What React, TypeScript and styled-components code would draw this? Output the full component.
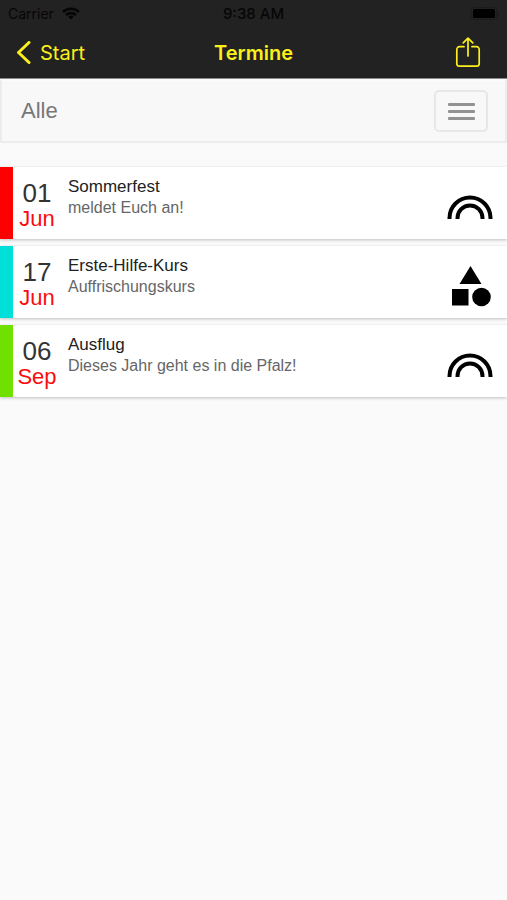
import React from "react";
import styled, { createGlobalStyle } from "styled-components";

const GlobalStyle = createGlobalStyle`
  *, *::before, *::after { box-sizing: border-box; }
  body {
    margin: 0;
    background: #fafafa;
    font-family: "Liberation Sans", Arial, sans-serif;
  }
`;

const Page = styled.div`
  min-height: 100vh;
  background: #fafafa;
`;

const Header = styled.header`
  background: #222222;
  border-bottom: 1px solid #8a8a8a;
  font-family: Inter, "Liberation Sans", sans-serif;
`;

const StatusBar = styled.div`
  display: grid;
  grid-template-columns: 1fr auto 1fr;
  align-items: center;
  height: 27px;
  padding: 0 8px;
  color: #060606;
  font-size: 14px;
  line-height: 20px;
`;

const Carrier = styled.span`
  display: flex;
  align-items: center;
  gap: 8px;
`;

const Clock = styled.span`
  font-size: 15px;
  font-weight: 500;
`;

const StatusEnd = styled.span`
  display: flex;
  justify-content: flex-end;
`;

const NavBar = styled.nav`
  display: grid;
  grid-template-columns: 1fr auto 1fr;
  align-items: center;
  height: 51px;
  padding: 0 26px 0 16px;
  color: #fbf01c;
`;

const BackLink = styled.a`
  display: flex;
  align-items: center;
  gap: 9px;
  justify-self: start;
  color: inherit;
  font-size: 20px;
  line-height: 24px;
  text-decoration: none;
`;

const Title = styled.h1`
  margin: 0 0 0 10px;
  font-size: 20px;
  font-weight: 600;
  line-height: 24px;
`;

const ShareButton = styled.button`
  display: flex;
  justify-self: end;
  padding: 0;
  border: 0;
  background: none;
  color: inherit;
  cursor: pointer;
`;

const FilterBar = styled.div`
  display: flex;
  align-items: center;
  justify-content: space-between;
  height: 64px;
  padding: 0 17px 0 19px;
  border: 2px solid #ececec;
  border-top-color: #fbfbfb;
  background: #f8f8f8;
`;

const FilterLabel = styled.span`
  color: #777777;
  font-size: 22px;
  line-height: 28px;
`;

const MenuButton = styled.button`
  display: flex;
  flex-direction: column;
  align-items: center;
  justify-content: center;
  gap: 4px;
  width: 54px;
  height: 42px;
  padding: 0;
  border: 2px solid #e7e7e7;
  border-radius: 5px;
  background: #f8f8f8;
  cursor: pointer;
`;

const MenuLine = styled.span`
  width: 27px;
  height: 3px;
  border-radius: 1px;
  background: #929292;
`;

const EventList = styled.ul`
  display: flex;
  flex-direction: column;
  gap: 7px;
  margin: 0;
  padding: 24px 0;
  list-style: none;
`;

const EventRow = styled.li<{ $accent: string }>`
  display: flex;
  min-height: 72px;
  padding-right: 14px;
  border-left: 13px solid ${(p) => p.$accent};
  background: #ffffff;
  box-shadow: 0 1px 3px rgba(0, 0, 0, 0.24);
`;

const EventDate = styled.time`
  display: flex;
  flex-direction: column;
  align-items: center;
  width: 48px;
  padding-top: 12px;
  color: #333333;
  font-size: 26px;
  line-height: 28px;
`;

const Month = styled.span`
  color: #fb0b0b;
  font-size: 22px;
  line-height: 24px;
`;

const EventText = styled.div`
  flex: 1;
  min-width: 0;
  padding: 9px 7px;
`;

const EventTitle = styled.h2`
  margin: 0;
  color: #222222;
  font-size: 17px;
  font-weight: 400;
  line-height: 21px;
`;

const EventNote = styled.p`
  margin: 0;
  color: #666666;
  font-size: 16px;
  line-height: 21px;
`;

const EventIcon = styled.span`
  display: flex;
  align-items: center;
  padding-top: 8px;
`;

const WifiIcon = () => (
  <svg width="18" height="13" viewBox="0 0 18 13" fill="none" stroke="currentColor" strokeWidth="2.6" aria-hidden="true">
    <path d="M1 5a11.3 11.3 0 0 1 16 0" />
    <path d="M4 8.2a7 7 0 0 1 10 0" />
    <path d="M9 12.6 6.3 9.9a3.8 3.8 0 0 1 5.4 0z" fill="currentColor" stroke="none" />
  </svg>
);

const BatteryIcon = () => (
  <svg width="29" height="14" viewBox="0 0 29 14" aria-hidden="true">
    <rect x="1" y="0.5" width="26" height="12" rx="3.5" fill="none" stroke="#1b1b1b" />
    <rect x="3" y="2" width="22" height="9" rx="1.5" fill="#000" />
    <path d="M27.6 5v4q1.2-.5 1.2-2t-1.2-2z" fill="#1b1b1b" />
  </svg>
);

const ChevronIcon = () => (
  <svg width="15" height="24" viewBox="0 0 15 24" fill="none" stroke="currentColor" strokeWidth="3" strokeLinecap="round" strokeLinejoin="round" aria-hidden="true">
    <path d="M13 1.5 2.5 11.5 13 21.5" />
  </svg>
);

const ShareIcon = () => (
  <svg width="26" height="32" viewBox="0 0 26 32" fill="none" stroke="currentColor" strokeWidth="1.7" strokeLinecap="round" strokeLinejoin="round" aria-hidden="true">
    <path d="M9 9.7H4.5A2.7 2.7 0 0 0 1.8 12.4v14a2.7 2.7 0 0 0 2.7 2.7h17a2.7 2.7 0 0 0 2.7-2.7v-14a2.7 2.7 0 0 0-2.7-2.7H17" />
    <path d="M13 19V1.4M8.2 5.9 13 1.2l4.8 4.7" />
  </svg>
);

const RainbowIcon = () => (
  <svg width="46" height="24" viewBox="0 0 46 24" fill="none" stroke="#000" strokeWidth="4" role="img" aria-label="Regenbogen">
    <path d="M2.5 24v-1a20.5 20.5 0 0 1 41 0v1" />
    <path d="M10.5 24v-1a12.5 12.5 0 0 1 25 0v1" />
  </svg>
);

const ShapesIcon = () => (
  <svg width="46" height="42" viewBox="0 0 46 42" role="img" aria-label="Formen">
    <path d="M23.5 1 34.5 19h-22zM5 24h16.5v16.5H5z" />
    <circle cx="34.5" cy="32" r="9.3" />
  </svg>
);

const events = [
  { day: "01", month: "Jun", title: "Sommerfest", note: "meldet Euch an!", accent: "#ff0000", Icon: RainbowIcon },
  { day: "17", month: "Jun", title: "Erste-Hilfe-Kurs", note: "Auffrischungskurs", accent: "#00e0d8", Icon: ShapesIcon },
  { day: "06", month: "Sep", title: "Ausflug", note: "Dieses Jahr geht es in die Pfalz!", accent: "#70e000", Icon: RainbowIcon },
];

export default function App() {
  return (
    <Page>
      <GlobalStyle />
      <Header>
        <StatusBar>
          <Carrier>
            Carrier
            <WifiIcon />
          </Carrier>
          <Clock>9:38 AM</Clock>
          <StatusEnd>
            <BatteryIcon />
          </StatusEnd>
        </StatusBar>
        <NavBar>
          <BackLink href="#start">
            <ChevronIcon />
            Start
          </BackLink>
          <Title>Termine</Title>
          <ShareButton type="button" aria-label="Teilen">
            <ShareIcon />
          </ShareButton>
        </NavBar>
      </Header>
      <FilterBar>
        <FilterLabel>Alle</FilterLabel>
        <MenuButton type="button" aria-label="Filter">
          <MenuLine />
          <MenuLine />
          <MenuLine />
        </MenuButton>
      </FilterBar>
      <main>
        <EventList>
          {events.map(({ day, month, title, note, accent, Icon }) => (
            <EventRow key={title} $accent={accent}>
              <EventDate>
                {day}
                <Month>{month}</Month>
              </EventDate>
              <EventText>
                <EventTitle>{title}</EventTitle>
                <EventNote>{note}</EventNote>
              </EventText>
              <EventIcon>
                <Icon />
              </EventIcon>
            </EventRow>
          ))}
        </EventList>
      </main>
    </Page>
  );
}
